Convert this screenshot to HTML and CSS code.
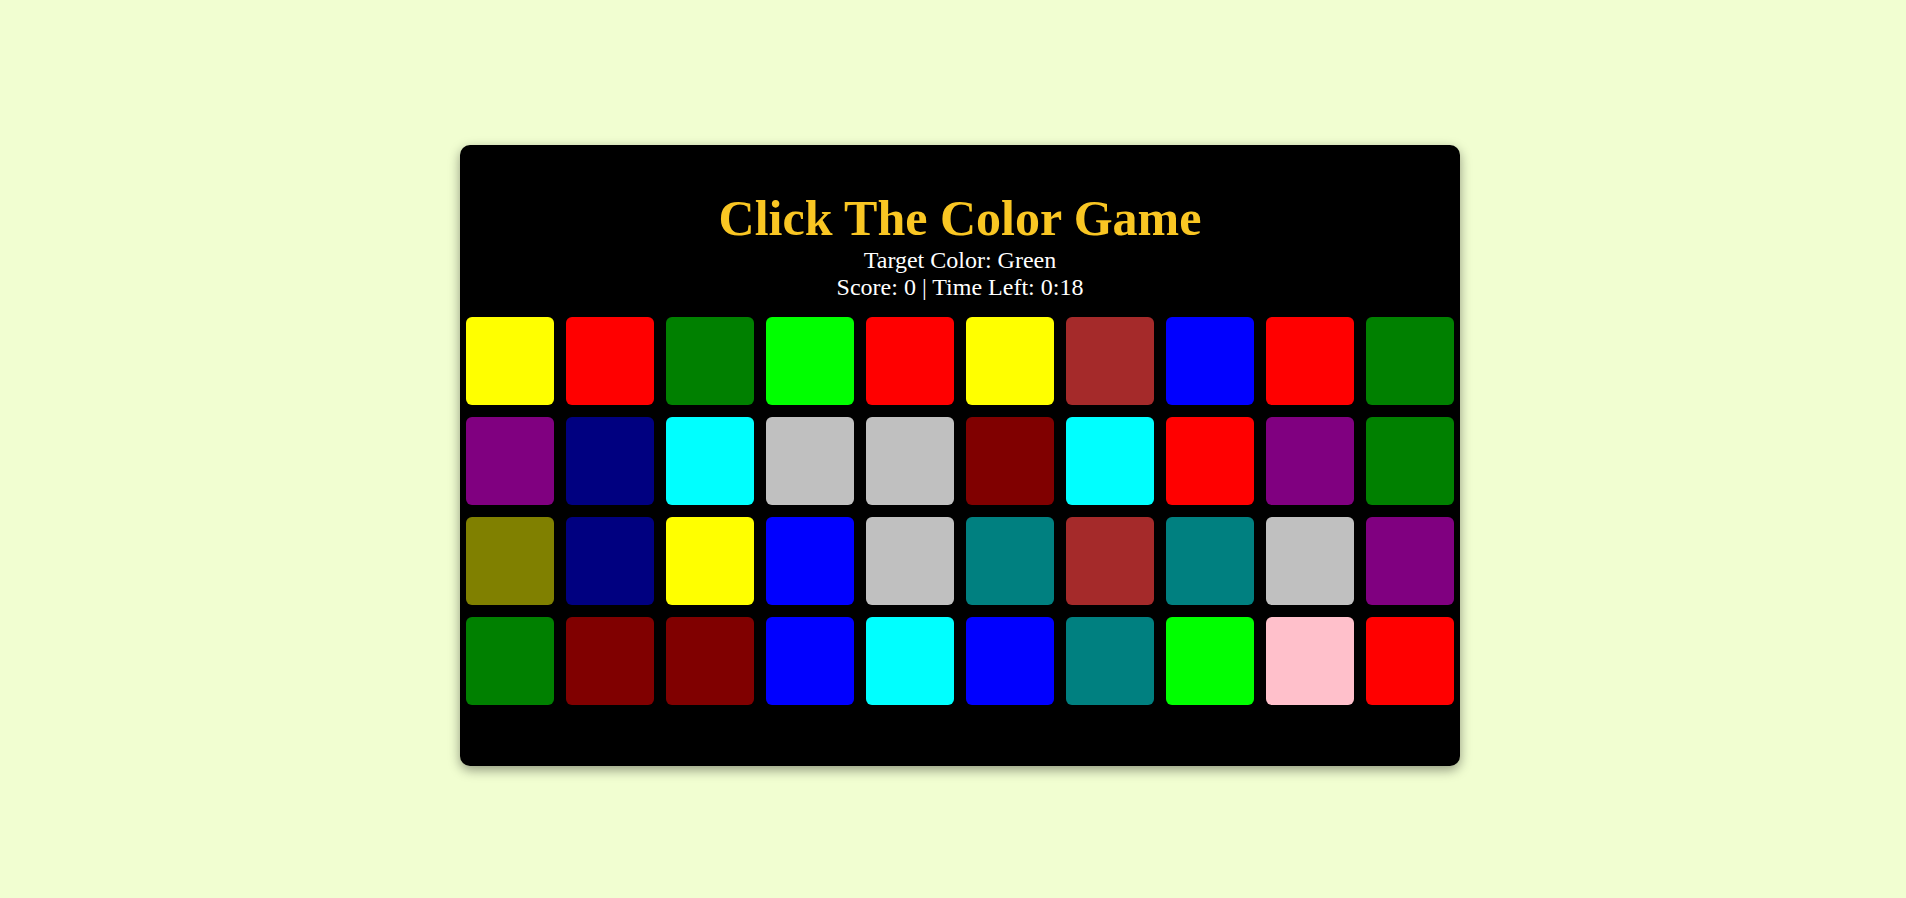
FILE: index.html
```html
<!DOCTYPE html>
<html lang="en">
<head>
<meta charset="utf-8">
<title>Click The Color Game</title>
<link rel="stylesheet" href="styles.css">
</head>
<body>
<div class="page">
  <div class="card">
    <h1 class="title">Click The Color Game</h1>
    <div class="info">Target Color: Green</div>
    <div class="info">Score: 0 | Time Left: 0:18</div>
    <div class="grid">
      <div class="sq yellow"></div><div class="sq red"></div><div class="sq green"></div><div class="sq lime"></div><div class="sq red"></div><div class="sq yellow"></div><div class="sq brown"></div><div class="sq blue"></div><div class="sq red"></div><div class="sq green"></div>
      <div class="sq purple"></div><div class="sq navy"></div><div class="sq cyan"></div><div class="sq silver"></div><div class="sq silver"></div><div class="sq maroon"></div><div class="sq cyan"></div><div class="sq red"></div><div class="sq purple"></div><div class="sq green"></div>
      <div class="sq olive"></div><div class="sq navy"></div><div class="sq yellow"></div><div class="sq blue"></div><div class="sq silver"></div><div class="sq teal"></div><div class="sq brown"></div><div class="sq teal"></div><div class="sq silver"></div><div class="sq purple"></div>
      <div class="sq green"></div><div class="sq maroon"></div><div class="sq maroon"></div><div class="sq blue"></div><div class="sq cyan"></div><div class="sq blue"></div><div class="sq teal"></div><div class="sq lime"></div><div class="sq pink"></div><div class="sq red"></div>
    </div>
  </div>
</div>
</body>
</html>
```
FILE: styles.css
```css
html, body {
  margin: 0;
  padding: 0;
}
body {
  background: #f1fed1;
  font-family: "Liberation Serif", "Times New Roman", serif;
}
.page {
  display: flex;
  align-items: flex-start;
  justify-content: flex-start;
  padding: 145px 0 0 460px;
  height: 898px;
  box-sizing: border-box;
}
.card {
  width: 1000px;
  box-sizing: border-box;
  background: #000;
  border-radius: 10px;
  box-shadow: 0 4px 12px rgba(0, 0, 0, 0.4);
  padding: 45px 0 55px 0;
  display: flex;
  flex-direction: column;
  align-items: center;
  color: #fff;
}
.title {
  margin: 0;
  font-size: 50px;
  font-weight: bold;
  color: #f9c623;
  line-height: 57px;
}
.info {
  font-size: 24px;
  line-height: 27px;
}
.grid {
  margin-top: 10px;
  display: grid;
  grid-template-columns: repeat(10, 88px);
  gap: 12px;
  padding: 6px;
}
.sq {
  width: 88px;
  height: 88px;
  border-radius: 6px;
  cursor: pointer;
}
.yellow { background: #ffff00; }
.red { background: #ff0000; }
.green { background: #008000; }
.lime { background: #00ff00; }
.brown { background: #a52a2a; }
.blue { background: #0000ff; }
.purple { background: #800080; }
.navy { background: #000080; }
.cyan { background: #00ffff; }
.silver { background: #c0c0c0; }
.maroon { background: #800000; }
.olive { background: #808000; }
.teal { background: #008080; }
.pink { background: #ffc0cb; }
```
